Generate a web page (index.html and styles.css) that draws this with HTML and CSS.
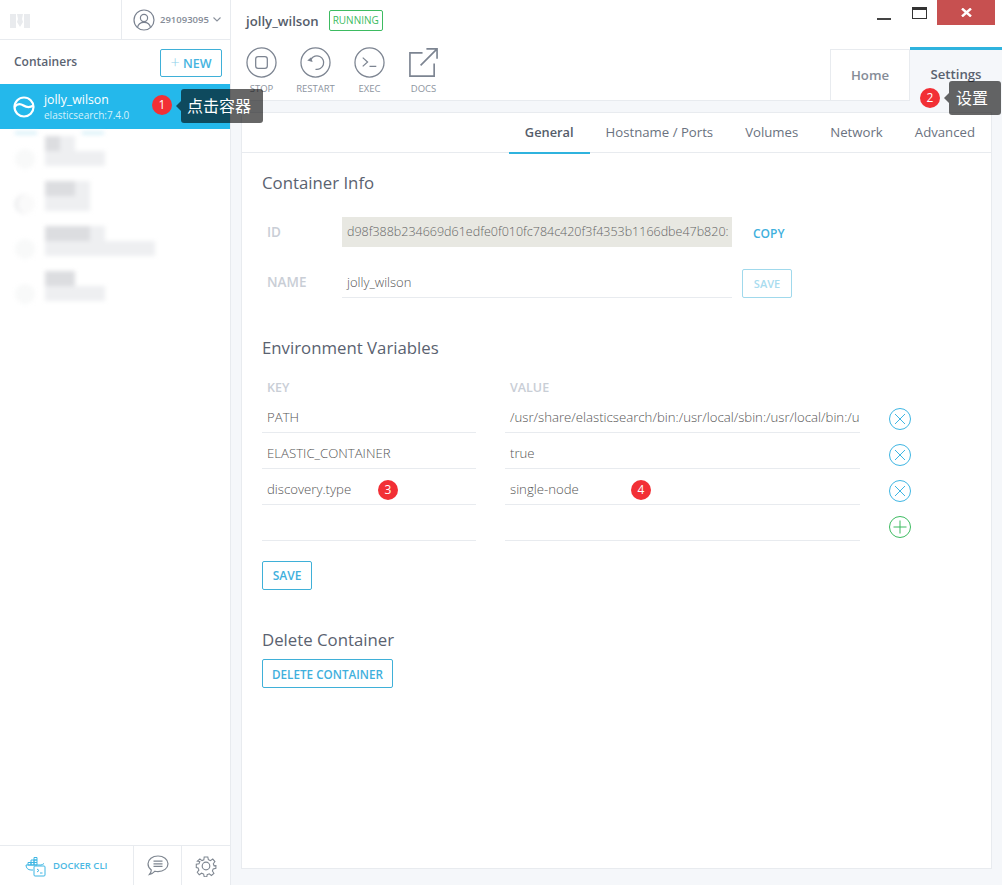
FILE: index.html
```html
<!DOCTYPE html>
<html lang="en">
<head>
    <meta charset="UTF-8">
    <title>Kitematic</title>
    <link rel="stylesheet" href="styles.css">
</head>
<body>
<div class="app">

    <!-- sidebar -->
    <aside class="sidebar">
        <div class="account-bar">
            <div class="logo">
                <svg width="20" height="16" viewBox="0 0 20 16"><path d="M0 1h6v14H0zM14 1h6v14h-6zM7 1h6l-1 5 1 3-3 5-3-5 1-3z" fill="#e9ebee"/></svg>
            </div>
            <div class="account">
                <svg width="22" height="22" viewBox="0 0 22 22" fill="none" stroke="#7a8290" stroke-width="1.2"><circle cx="11" cy="11" r="10"/><circle cx="11" cy="9" r="3.6"/><path d="M4.5 18.5c.6-3.6 3-5.2 6.5-5.2s5.900 1.600 6.500 5.200"/></svg>
                <span class="account-name">291093095</span>
                <svg width="8" height="5" viewBox="0 0 8 5" fill="none" stroke="#8a919c" stroke-width="1.1"><path d="M.5.5 4 4 7.500.5"/></svg>
            </div>
        </div>
        <div class="containers-head">
            <span class="containers-title">Containers</span>
            <button class="btn btn-new"><span class="plus">+</span> NEW</button>
        </div>
        <div class="container-item active">
            <svg width="22" height="22" viewBox="0 0 22 22" fill="none" stroke="#fff" stroke-width="2.200"><circle cx="11" cy="11" r="9.500"/><path d="M1.500 11c3-4 6-3.500 9-1.500s6 2.500 10 0"/></svg>
            <div class="item-text">
                <div class="item-name">jolly_wilson</div>
                <div class="item-image">elasticsearch:7.4.0</div>
            </div>
        </div>
        <div class="blur-row first">
            <span class="blur-icon"></span>
            <div class="blur-text">
                <div class="blur-line"><i class="dark w15"></i><i class="w15"></i></div>
                <div class="blur-line"><i class="w60"></i></div>
            </div>
        </div>
        <div class="blur-row">
            <span class="blur-icon ring"></span>
            <div class="blur-text">
                <div class="blur-line"><i class="dark w30"></i><i class="w15"></i></div>
                <div class="blur-line"><i class="w45"></i></div>
            </div>
        </div>
        <div class="blur-row">
            <span class="blur-icon"></span>
            <div class="blur-text">
                <div class="blur-line"><i class="dark w45"></i><i class="w15"></i></div>
                <div class="blur-line"><i class="w110"></i></div>
            </div>
        </div>
        <div class="blur-row">
            <span class="blur-icon"></span>
            <div class="blur-text">
                <div class="blur-line"><i class="dark w30"></i></div>
                <div class="blur-line"><i class="w60"></i></div>
            </div>
        </div>
        <div class="sidebar-foot">
            <div class="foot-cli">
                <svg width="22" height="22" viewBox="0 0 22 22" fill="none" stroke="#3fb6e3" stroke-width="1"><path d="M1 10h15c1 0 2-1 3-1.500M1 10c0 3 2 5 5 5h2"/><path d="M3 7.500h3v2.500H3zM6 7.500h3v2.500H6zM9 7.500h3v2.500H9zM6 5h3v2.500H6zM9 5h3v2.500H9zM9 2.500h3V5H9z"/><rect x="9" y="11" width="11" height="10" rx="1" fill="#fff"/><path d="m12 14 2 1.500-2 1.500M15 18h2.500"/></svg>
                <span>DOCKER CLI</span>
            </div>
            <div class="foot-icon foot-chat">
                <svg width="22" height="21" viewBox="0 0 22 21" fill="none" stroke="#7f8791" stroke-width="1.200"><path d="M11 1c5.500 0 10 3.400 10 7.800s-4.500 7.800-10 7.800c-1 0-2-.1-3-.4-1.300 1.400-3 2.600-5.500 3.300 1-1.200 1.700-2.600 1.800-4.500C2.300 13.500 1 11.300 1 8.800 1 4.400 5.500 1 11 1z"/><path d="M6.500 6.200h9M6.500 8.800h9M6.500 11.400h9"/></svg>
            </div>
            <div class="foot-icon foot-gear">
                <svg width="22" height="22" viewBox="0 0 22 22" fill="none" stroke="#7f8791" stroke-width="1.200"><circle cx="11" cy="11" r="3.800"/><path d="M9 1h4l.6 3 2.300 1 2.600-1.700 2.400 2.800-1.800 2.400.9 2.300 2-.2v3l-3 .6-.9 2.300 1.700 2.600-2.800 2.400-2.400-1.800-2.300.9-.4 2.400H9l-.6-3-2.300-1-2.600 1.700-2.200-2.800 1.800-2.400-.9-2.300-2-.4v-3.800l3-.6.9-2.300L1.400 5.600l2.800-2.400 2.400 1.800 2-.9z" transform="translate(1.100 1.100) scale(.9)"/></svg>
            </div>
        </div>
    </aside>

    <!-- main area -->
    <main class="main">
        <header class="topbar">
            <div class="top-left">
                <div class="title-row">
                    <span class="title">jolly_wilson</span>
                    <span class="status">RUNNING</span>
                </div>
                <div class="actions">
                    <div class="action">
                        <svg width="31" height="31" viewBox="0 0 32 32" fill="none" stroke="#7c8491" stroke-width="1.300"><circle cx="16" cy="16" r="15"/><rect x="10" y="10" width="12" height="12" rx="2.500"/></svg>
                        <span>STOP</span>
                    </div>
                    <div class="action">
                        <svg width="31" height="31" viewBox="0 0 32 32" fill="none" stroke="#7c8491" stroke-width="1.300"><circle cx="16" cy="16" r="15"/><path d="M11.500 12.500a7 7 0 1 1 4.500 10.500"/><path d="m7.500 14 4-3.500 1.500 5z" fill="#7c8491" stroke="none"/></svg>
                        <span>RESTART</span>
                    </div>
                    <div class="action">
                        <svg width="31" height="31" viewBox="0 0 32 32" fill="none" stroke="#7c8491" stroke-width="1.300"><circle cx="16" cy="16" r="15"/><path d="m9 11 5 4.500-5 4.500M16 20h7"/></svg>
                        <span>EXEC</span>
                    </div>
                    <div class="action">
                        <svg width="31" height="31" viewBox="0 0 32 32" fill="none" stroke="#7c8491" stroke-width="1.700"><path d="M15 6H2v24h25V17"/><path d="M13 19 30 2M19 2h11v10"/></svg>
                        <span>DOCS</span>
                    </div>
                </div>
            </div>
            <div class="top-right">
                <div class="window-controls">
                    <span class="win-min"></span>
                    <span class="win-max"></span>
                    <span class="win-close">
                        <svg width="11" height="9" viewBox="0 0 11 9" stroke="#fff" stroke-width="2.400"><path d="m1 .5 9 8M10 .5l-9 8"/></svg>
                    </span>
                </div>
                <div class="view-tabs">
                    <div class="view-tab">Home</div>
                    <div class="view-tab current">Settings</div>
                </div>
            </div>
        </header>

        <section class="card">
            <nav class="sub-tabs">
                <span class="sub-tab current">General</span>
                <span class="sub-tab">Hostname / Ports</span>
                <span class="sub-tab">Volumes</span>
                <span class="sub-tab">Network</span>
                <span class="sub-tab">Advanced</span>
            </nav>
            <div class="card-body">
                <h2 class="heading">Container Info</h2>
                <div class="info-row id-row">
                    <label class="info-label">ID</label>
                    <div class="id-value">d98f388b234669d61edfe0f010fc784c420f3f4353b1166dbe47b820:</div>
                    <span class="copy">COPY</span>
                </div>
                <div class="info-row name-row">
                    <label class="info-label">NAME</label>
                    <div class="name-value">jolly_wilson</div>
                    <button class="btn btn-faded">SAVE</button>
                </div>

                <h2 class="heading env-heading">Environment Variables</h2>
                <div class="env-head">
                    <span class="head-key">KEY</span>
                    <span class="head-val">VALUE</span>
                </div>
                <div class="env-row">
                    <div class="env-key">PATH</div>
                    <div class="env-val">/usr/share/elasticsearch/bin:/usr/local/sbin:/usr/local/bin:/u</div>
                    <svg class="env-icon" width="24" height="24" viewBox="0 0 24 24" fill="none" stroke="#3fb6e3"><circle cx="12" cy="12" r="10.500"/><path d="m7 7 10 10M17 7 7 17"/></svg>
                </div>
                <div class="env-row">
                    <div class="env-key">ELASTIC_CONTAINER</div>
                    <div class="env-val">true</div>
                    <svg class="env-icon" width="24" height="24" viewBox="0 0 24 24" fill="none" stroke="#3fb6e3"><circle cx="12" cy="12" r="10.500"/><path d="m7 7 10 10M17 7 7 17"/></svg>
                </div>
                <div class="env-row">
                    <div class="env-key">discovery.type</div>
                    <div class="env-val">single-node</div>
                    <svg class="env-icon" width="24" height="24" viewBox="0 0 24 24" fill="none" stroke="#3fb6e3"><circle cx="12" cy="12" r="10.500"/><path d="m7 7 10 10M17 7 7 17"/></svg>
                </div>
                <div class="env-row">
                    <div class="env-key"></div>
                    <div class="env-val"></div>
                    <svg class="env-icon" width="24" height="24" viewBox="0 0 24 24" fill="none" stroke="#3dbb61"><circle cx="12" cy="12" r="10.500"/><path d="M12 5.500v13M5.500 12h13"/></svg>
                </div>
                <button class="btn btn-save">SAVE</button>

                <h2 class="heading delete-heading">Delete Container</h2>
                <button class="btn btn-delete">DELETE CONTAINER</button>
            </div>
        </section>
    </main>

    <!-- annotations drawn over the screenshot -->
    <span class="mark mark-1">1</span>
    <span class="tip tip-1">点击容器</span>
    <span class="mark mark-2">2</span>
    <span class="tip tip-2">设置</span>
    <span class="mark mark-3">3</span>
    <span class="mark mark-4">4</span>
</div>
</body>
</html>
```

FILE: styles.css
```css
* {
    box-sizing: border-box;
}
html, body {
    margin: 0;
    height: 100%;
}
body {
    font-family: "Open Sans", "Noto Sans CJK SC", sans-serif;
    color: #5a6270;
    background: #fff;
    overflow: hidden;
}
.app {
    position: relative;
    display: flex;
    width: 1002px;
    height: 885px;
    overflow: hidden;
}
.btn {
    font-family: inherit;
    font-size: 12px;
    font-weight: 600;
    color: #3fb0dd;
    background: #fff;
    border: 1px solid #3fb0d8;
    border-radius: 2px;
    padding: 0;
    height: 29px;
}

/* sidebar */
.sidebar {
    display: flex;
    flex-direction: column;
    width: 231px;
    flex: none;
    border-right: 1px solid #e8ebef;
    background: #fff;
}
.account-bar {
    display: flex;
    height: 40px;
    flex: none;
    border-bottom: 1px solid #e8ebef;
}
.logo {
    width: 121px;
    padding: 12px 0 0 10px;
}
.account {
    display: flex;
    align-items: center;
    flex: 1;
    padding-left: 11px;
    border-left: 1px solid #e8ebef;
}
.account-name {
    font-size: 9.500px;
    font-weight: 600;
    color: #858c97;
    margin: 0 4px 0 5px;
}
.containers-head {
    display: flex;
    align-items: center;
    justify-content: space-between;
    height: 44px;
    flex: none;
    padding: 0 8px 2px 14px;
}
.containers-title {
    font-size: 12px;
    font-weight: 600;
    color: #5b6472;
}
.btn-new {
    width: 62px;
    height: 28px;
    margin-top: 4px;
    font-size: 12.5px;
    color: #45b4e0;
}
.plus {
    font-size: 16px;
    font-weight: 300;
    line-height: 12px;
    color: #8fd0ea;
}
.container-item {
    display: flex;
    align-items: center;
    gap: 9px;
    height: 45px;
    flex: none;
    padding-left: 13px;
    background: #24b8eb;
    color: #fff;
}
.item-name {
    font-size: 12.3px;
    line-height: 16px;
}
.item-image {
    font-size: 10px;
    line-height: 14px;
    color: #d3f1fb;
}
.blur-row {
    position: relative;
    display: flex;
    height: 45px;
    flex: none;
    padding: 7px 0 0 15px;
    filter: blur(2px);
}
.blur-row.first::before {
    content: "";
    position: absolute;
    left: 15px;
    top: 3px;
    width: 22px;
    height: 2px;
    background: #bfe6f4;
    box-shadow: 67px 0 0 0 #bfe6f4;
}
.blur-icon {
    flex: none;
    width: 20px;
    height: 20px;
    margin: 13px 10px 0 0;
    border-radius: 50%;
    background: #f8f9f9;
}
.blur-icon.ring {
    background: #fafafa;
    box-shadow: inset 2px 0 0 #e4e5e8;
}
.blur-line {
    display: flex;
    height: 15px;
}
.blur-line i {
    display: block;
    height: 15px;
    background: #eeeff1;
}
.blur-line i.dark {
    background: #dcdde0;
}
.w15 { width: 15px; }
.w30 { width: 30px; }
.w45 { width: 45px; }
.w60 { width: 60px; }
.w110 { width: 110px; }
.sidebar-foot {
    display: flex;
    height: 40px;
    margin-top: auto;
    border-top: 1px solid #e8ebef;
}
.foot-cli {
    display: flex;
    align-items: center;
    gap: 6px;
    width: 133px;
    padding-left: 25px;
    font-size: 9.500px;
    font-weight: 600;
    color: #4bb8e3;
}
.foot-icon {
    display: flex;
    align-items: center;
    justify-content: center;
    border-left: 1px solid #e8ebef;
}
.foot-chat {
    width: 48px;
}
.foot-gear {
    flex: 1;
}

/* main */
.main {
    display: flex;
    flex-direction: column;
    flex: 1;
    min-width: 0;
    background: #f5f7fa;
}
.topbar {
    display: flex;
    justify-content: space-between;
    height: 101px;
    flex: none;
    background: #fff;
    border-bottom: 1px solid #e8ebef;
}
.top-left {
    padding: 10px 0 0 15px;
}
.title-row {
    display: flex;
    align-items: center;
    gap: 10px;
    height: 21px;
}
.title {
    font-size: 13.200px;
    font-weight: 600;
    color: #555d6a;
}
.status {
    display: block;
    width: 54px;
    height: 21px;
    border: 1px solid #3dbb61;
    border-radius: 2px;
    font-size: 10px;
    line-height: 19px;
    text-align: center;
    color: #3dbb61;
}
.actions {
    display: flex;
    gap: 23px;
    margin-top: 16px;
}
.action {
    display: flex;
    flex-direction: column;
    align-items: center;
    width: 31px;
}
.action span {
    margin-top: 4px;
    font-size: 9.500px;
    line-height: 13px;
    color: #8d94a0;
}
.top-right {
    display: flex;
    flex-direction: column;
    align-items: flex-end;
    justify-content: space-between;
}
.window-controls {
    display: flex;
    align-items: flex-start;
    padding-right: 7px;
}
.win-min {
    width: 14px;
    height: 2px;
    margin: 18px 21px 0 0;
    background: #444;
}
.win-max {
    width: 15px;
    height: 12px;
    margin: 7px 10px 0 0;
    border: 1px solid #333;
    border-top-width: 3px;
}
.win-close {
    display: flex;
    align-items: center;
    justify-content: center;
    width: 58px;
    height: 25px;
    background: #c75050;
}
.view-tabs {
    display: flex;
    align-items: flex-end;
    margin-bottom: -1px;
}
.view-tab {
    width: 80px;
    height: 52px;
    border: 1px solid #e8ebef;
    border-bottom: 0;
    font-size: 13.200px;
    font-weight: 600;
    line-height: 50px;
    text-align: center;
    color: #858c97;
}
.view-tab.current {
    width: 92px;
    height: 54px;
    border: 0;
    border-top: 3px solid #2fb3de;
    background: #f5f7fa;
    line-height: 49px;
    color: #5a6270;
}
.card {
    display: flex;
    flex-direction: column;
    flex: 1;
    margin: 11px 10px 16px 10px;
    background: #fff;
    border: 1px solid #e8ebef;
}
.sub-tabs {
    display: flex;
    justify-content: flex-end;
    height: 40px;
    flex: none;
    border-bottom: 1px solid #e8ebef;
}
.sub-tab {
    padding: 0 16px;
    font-size: 13.200px;
    line-height: 38px;
    color: #6a7280;
}
.sub-tab.current {
    height: 41px;
    border-bottom: 2px solid #2fb3de;
    font-size: 12.800px;
    font-weight: 600;
    color: #555d6a;
}
.card-body {
    padding: 0 0 0 20px;
}
.heading {
    margin: 0;
    font-size: 16.800px;
    font-weight: 400;
    line-height: 22px;
    color: #5a6270;
}
.card-body > .heading:first-child {
    margin-top: 19px;
}
.info-row {
    display: flex;
    align-items: center;
}
.id-row {
    height: 30px;
    margin-top: 23px;
}
.name-row {
    height: 30px;
    margin-top: 21px;
}
.info-label {
    width: 80px;
    padding-left: 5px;
    font-size: 13.500px;
    font-weight: 600;
    color: #c9ced6;
}
.name-row .info-label {
    margin-top: -2px;
}
.id-value {
    width: 390px;
    height: 30px;
    padding-left: 5px;
    background: #e8e8e2;
    font-size: 12.500px;
    font-weight: 300;
    line-height: 30px;
    white-space: nowrap;
    overflow: hidden;
    color: #666;
}
.copy {
    margin: 2px 0 0 21px;
    font-size: 12px;
    font-weight: 600;
    color: #3fb0dd;
}
.name-value {
    width: 390px;
    height: 30px;
    padding-left: 5px;
    border-bottom: 1px solid #e8ebef;
    font-size: 13px;
    font-weight: 300;
    line-height: 28px;
    color: #555;
}
.btn-faded {
    width: 50px;
    margin-left: 10px;
    font-size: 11px;
    color: #a9dcef;
    border-color: #a0d9ec;
}
.env-heading {
    margin-top: 39px;
}
.env-head {
    display: flex;
    margin-top: 20px;
    height: 18px;
    font-size: 12.500px;
    font-weight: 600;
    line-height: 18px;
    color: #c9ced6;
}
.head-key {
    width: 243px;
    padding-left: 5px;
}
.head-val {
    padding-left: 5px;
}
.env-row {
    display: flex;
    align-items: flex-start;
    height: 36px;
}
.env-key,
.env-val {
    height: 36px;
    padding-top: 6px;
    padding-left: 5px;
    border-bottom: 1px solid #e8ebef;
    font-size: 13.200px;
    font-weight: 300;
    line-height: 29px;
    color: #555;
}
.env-key {
    width: 214px;
    margin-right: 29px;
}
.env-val {
    width: 355px;
    white-space: nowrap;
    overflow: hidden;
}
.env-icon {
    flex: none;
    margin: 10px 0 0 28px;
}
.btn-save {
    display: block;
    width: 50px;
    margin-top: 20px;
}
.delete-heading {
    margin-top: 39px;
}
.btn-delete {
    display: block;
    width: 131px;
    margin-top: 8px;
    font-size: 11.700px;
}

/* annotations */
.mark {
    position: absolute;
    width: 20px;
    height: 20px;
    border-radius: 50%;
    background: #f22f35;
    color: #fff;
    font-size: 12px;
    line-height: 20px;
    text-align: center;
}
.mark-1 { left: 152px; top: 95px; }
.mark-2 { left: 920px; top: 88px; }
.mark-3 { left: 378px; top: 480px; }
.mark-4 { left: 631px; top: 480px; }
.tip {
    position: absolute;
    height: 34px;
    padding-left: 6px;
    border-radius: 3px;
    background: rgba(0, 0, 0, .6);
    color: #fff;
    font-size: 16px;
    line-height: 34px;
}
.tip::before {
    content: "";
    position: absolute;
    left: -5px;
    top: 12px;
    border-style: solid;
    border-width: 5px 5px 5px 0;
    border-color: transparent rgba(0, 0, 0, .6) transparent transparent;
}
.tip-1 { left: 181px; top: 89px; width: 82px; }
.tip-2 { left: 949px; top: 81px; width: 52px; padding-left: 7px; }
```
